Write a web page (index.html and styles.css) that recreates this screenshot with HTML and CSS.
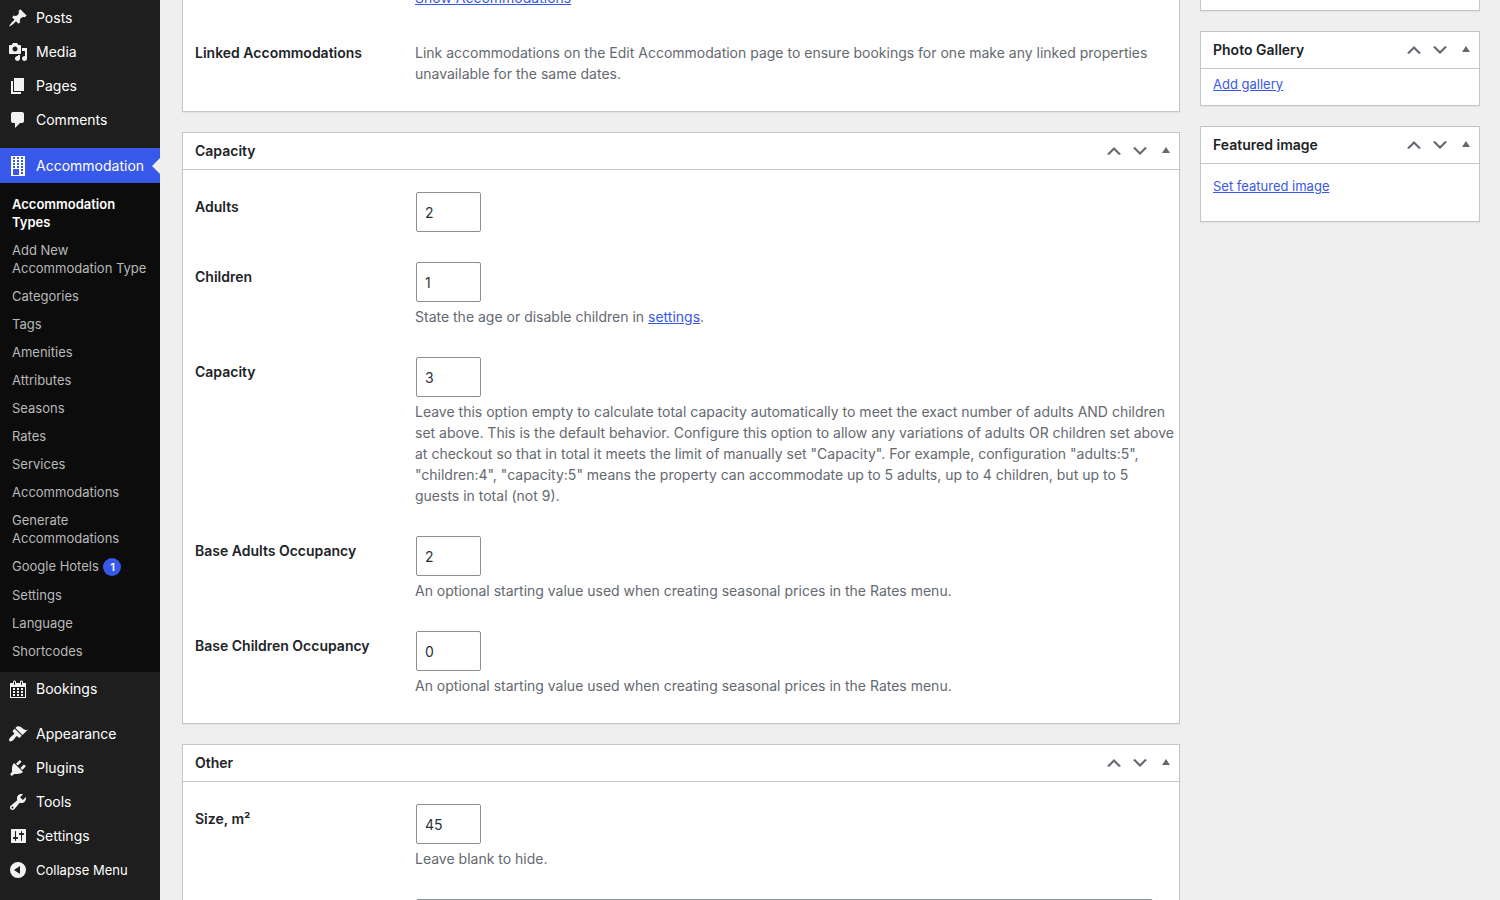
FILE: index.html
```html
<!DOCTYPE html>
<html lang="en">
  <head>
    <meta charset="UTF-8" />
    <meta name="viewport" content="width=device-width, initial-scale=1.0" />
    <title>Edit Accommodation Type</title>
    <link rel="stylesheet" href="styles.css">
  </head>
  <body>
    <!-- Shared icons -->
    <svg class="sprite" aria-hidden="true">
      <symbol id="up" viewBox="0 0 20 20"><path d="M15 14l-5-5-5 5-2-1 7-7 7 7z" /></symbol>
      <symbol id="down" viewBox="0 0 20 20"><path d="M5 6l5 5 5-5 2 1-7 7-7-7z" /></symbol>
      <symbol id="toggle" viewBox="0 0 20 20"><path d="M6 12l4-6 4 6z" /></symbol>
    </svg>

    <div class="admin">
      <nav class="admin-menu">
        <ul class="menu">
          <li>
            <a href="#" class="menu-link">
              <svg class="icon" viewBox="0 0 20 20"><path d="M10.44 3.02l1.82-1.82 6.36 6.35-1.83 1.82c-1.05-.68-2.48-.57-3.41.36l-.75.75c-.92.93-1.04 2.35-.35 3.41l-1.83 1.82-2.41-2.41-2.8 2.79c-.42.42-3.38 2.71-3.8 2.29s1.86-3.39 2.28-3.81l2.79-2.79L4.1 9.36l1.83-1.82c1.05.69 2.48.57 3.4-.36l.75-.75c.93-.92 1.05-2.35.36-3.41z" /></svg>
              Posts
            </a>
          </li>
          <li>
            <a href="#" class="menu-link">
              <svg class="icon" viewBox="0 0 20 20"><path d="M13 11V4c0-.55-.45-1-1-1h-1.67L9 1H5L3.67 3H2c-.55 0-1 .45-1 1v7c0 .55.45 1 1 1h10c.55 0 1-.45 1-1zM7 4.5c1.38 0 2.5 1.12 2.5 2.5S8.38 9.5 7 9.5 4.5 8.38 4.5 7 5.62 4.5 7 4.5zM14 6h5v10.5c0 1.38-1.12 2.5-2.5 2.5S14 17.88 14 16.5s1.12-2.5 2.5-2.5c.17 0 .34.02.5.05V9h-3V6zm-4 8.05V13h2v3.5c0 1.38-1.12 2.5-2.5 2.5S7 17.88 7 16.5 8.12 14 9.5 14c.17 0 .34.02.5.05z" /></svg>
              Media
            </a>
          </li>
          <li>
            <a href="#" class="menu-link">
              <svg class="icon" viewBox="0 0 20 20"><path d="M6 15V2h10v13H6zm-1 1h8v2H3V5h2v11z" /></svg>
              Pages
            </a>
          </li>
          <li>
            <a href="#" class="menu-link">
              <svg class="icon" viewBox="0 0 20 20"><path d="M5 2h9c1.1 0 2 .9 2 2v7c0 1.1-.9 2-2 2h-2l-5 5v-5H5c-1.1 0-2-.9-2-2V4c0-1.1.9-2 2-2z" /></svg>
              Comments
            </a>
          </li>
          <li class="separated">
            <a href="#" class="menu-link current">
              <svg class="icon" viewBox="0 0 20 20" shape-rendering="crispEdges"><path fill-rule="evenodd" d="M3 0h14v20H3zM5 1h2v2H5zM9 1h2v2H9zM13 1h2v2h-2zM5 4h2v2H5zM9 4h2v2H9zM13 4h2v2h-2zM5 7h2v2H5zM9 7h2v2H9zM13 7h2v2h-2zM5 10h2v2H5zM9 10h2v2H9zM13 10h2v2h-2zM5 13h6v6H5zM13 13h2v2h-2zM13 16h2v2h-2z" /></svg>
              Accommodation
            </a>
            <ul class="submenu">
              <li><a href="#" class="active">Accommodation Types</a></li>
              <li><a href="#">Add New Accommodation Type</a></li>
              <li><a href="#">Categories</a></li>
              <li><a href="#">Tags</a></li>
              <li><a href="#">Amenities</a></li>
              <li><a href="#">Attributes</a></li>
              <li><a href="#">Seasons</a></li>
              <li><a href="#">Rates</a></li>
              <li><a href="#">Services</a></li>
              <li><a href="#">Accommodations</a></li>
              <li><a href="#">Generate Accommodations</a></li>
              <li><a href="#">Google Hotels <span class="count">1</span></a></li>
              <li><a href="#">Settings</a></li>
              <li><a href="#">Language</a></li>
              <li><a href="#">Shortcodes</a></li>
            </ul>
          </li>
          <li>
            <a href="#" class="menu-link">
              <svg class="icon" viewBox="0 0 20 20"><path d="M15 4h3v15H2V4h3V3c0-.41.15-.76.44-1.06.29-.29.65-.44 1.06-.44s.77.15 1.06.44c.29.3.44.65.44 1.06v1h4V3c0-.41.15-.76.44-1.06.29-.29.65-.44 1.06-.44s.77.15 1.06.44c.29.3.44.65.44 1.06v1zM6 3v2.5c0 .14.05.26.15.36.09.09.21.14.35.14s.26-.05.35-.14c.1-.1.15-.22.15-.36V3c0-.14-.05-.26-.15-.35-.09-.1-.21-.15-.35-.15s-.26.05-.35.15c-.1.09-.15.21-.15.35zm7 0v2.5c0 .14.05.26.14.36.1.09.22.14.36.14s.26-.05.36-.14c.09-.1.14-.22.14-.36V3c0-.14-.05-.26-.14-.35-.1-.1-.22-.15-.36-.15s-.26.05-.36.15c-.09.09-.14.21-.14.35zm4 15V8H3v10h14zM5 9h2v2H5zM9 9h2v2H9zM13 9h2v2h-2zM5 12h2v2H5zM9 12h2v2H9zM13 12h2v2h-2zM5 15h2v2H5zM9 15h2v2H9zM13 15h2v2h-2z" /></svg>
              Bookings
            </a>
          </li>
          <li class="separated">
            <a href="#" class="menu-link">
              <svg class="icon" viewBox="0 0 20 20"><path d="M14.48 11.06L7.41 3.99l1.5-1.5c.5-.56 2.3-.47 3.51.32 1.21.8 1.43 1.28 2.91 2.1 1.18.64 2.45 1.26 4.45.85zm-.71.71L6.7 4.7 4.93 6.47c-.39.39-.39 1.02 0 1.41l1.06 1.06c.39.39.39 1.03 0 1.42-.6.6-1.43 1.11-2.21 1.69-.35.26-.7.53-1.01.84C1.43 14.23.4 16.08 1.4 17.07c.99 1 2.84-.03 4.18-1.36.31-.31.58-.66.85-1.02.57-.78 1.08-1.61 1.69-2.21.39-.39 1.02-.39 1.41 0l1.06 1.06c.39.39 1.02.39 1.41 0z" /></svg>
              Appearance
            </a>
          </li>
          <li>
            <a href="#" class="menu-link">
              <svg class="icon" viewBox="0 0 20 20"><path d="M13.11 4.36L9.87 7.6 8 5.73l3.24-3.24c.35-.34 1.05-.2 1.56.32.52.51.66 1.21.31 1.55zm-8 1.77l.91-1.12 9.01 9.01-1.19.84c-.71.71-2.63 1.16-3.82 1.16H6.14L4.9 17.26c-.59.59-1.54.59-2.12 0-.59-.58-.59-1.53 0-2.12l1.24-1.24v-3.88c0-1.13.4-3.19 1.09-3.89zm7.26 3.97l3.24-3.24c.34-.35 1.04-.21 1.55.31.52.51.66 1.21.31 1.55l-3.24 3.25z" /></svg>
              Plugins
            </a>
          </li>
          <li>
            <a href="#" class="menu-link">
              <svg class="icon" viewBox="0 0 20 20"><path d="M16.68 9.77c-1.34 1.34-3.3 1.67-4.95.99l-5.41 6.52c-.99.99-2.59.99-3.58 0s-.99-2.59 0-3.57l6.52-5.42c-.68-1.65-.35-3.61.99-4.95 1.28-1.28 3.12-1.62 4.72-1.06l-2.89 2.89 2.82 2.82 2.86-2.87c.53 1.58.18 3.39-1.08 4.65zM3.81 16.21c.4.39 1.04.39 1.43 0 .4-.4.4-1.04 0-1.43-.39-.4-1.03-.4-1.43 0-.39.39-.39 1.03 0 1.43z" /></svg>
              Tools
            </a>
          </li>
          <li>
            <a href="#" class="menu-link">
              <svg class="icon" viewBox="0 0 20 20"><path d="M18 16V4c0-.55-.45-1-1-1H4c-.55 0-1 .45-1 1v12c0 .55.45 1 1 1h13c.55 0 1-.45 1-1zM8 11h1c.55 0 1 .45 1 1s-.45 1-1 1H8v1.5c0 .28-.22.5-.5.5s-.5-.22-.5-.5V13H6c-.55 0-1-.45-1-1s.45-1 1-1h1V5.5c0-.28.22-.5.5-.5s.5.22.5.5V11zm5-2h-1c-.55 0-1-.45-1-1s.45-1 1-1h1V5.5c0-.28.22-.5.5-.5s.5.22.5.5V7h1c.55 0 1 .45 1 1s-.45 1-1 1h-1v5.5c0 .28-.22.5-.5.5s-.5-.22-.5-.5V9z" /></svg>
              Settings
            </a>
          </li>
          <li>
            <button type="button" class="menu-link collapse">
              <svg class="icon" viewBox="0 0 20 20"><path fill-rule="evenodd" d="M10 2a8 8 0 1 1 0 16 8 8 0 0 1 0-16zM12 6v8l-6-4z" /></svg>
              Collapse Menu
            </button>
          </li>
        </ul>
      </nav>

      <main class="content">
        <div class="main-column">
          <section class="panel panel-open">
            <div class="panel-body">
              <div class="field">
                <span class="field-label"></span>
                <div class="field-value">
                  <a href="#">Show Accommodations</a>
                </div>
              </div>
              <div class="field">
                <span class="field-label">Linked Accommodations</span>
                <div class="field-value">
                  <p>
                    Link accommodations on the Edit Accommodation page to ensure
                    bookings for one make any linked properties unavailable for
                    the same dates.
                  </p>
                </div>
              </div>
            </div>
          </section>

          <section class="panel">
            <header class="panel-header">
              <h2>Capacity</h2>
              <button type="button" aria-label="Move up"><svg class="icon"><use href="#up" /></svg></button>
              <button type="button" aria-label="Move down"><svg class="icon"><use href="#down" /></svg></button>
              <button type="button" aria-label="Toggle panel"><svg class="icon"><use href="#toggle" /></svg></button>
            </header>
            <div class="panel-body">
              <div class="field">
                <label class="field-label" for="adults">Adults</label>
                <div class="field-value">
                  <input type="text" class="small-text" id="adults" value="2" />
                </div>
              </div>
              <div class="field">
                <label class="field-label" for="children">Children</label>
                <div class="field-value">
                  <input type="text" class="small-text" id="children" value="1" />
                  <p>State the age or disable children in <a href="#">settings</a>.</p>
                </div>
              </div>
              <div class="field">
                <label class="field-label" for="capacity">Capacity</label>
                <div class="field-value">
                  <input type="text" class="small-text" id="capacity" value="3" />
                  <p>
                    Leave this option empty to calculate total capacity
                    automatically to meet the exact number of adults AND
                    children set above. This is the default behavior. Configure
                    this option to allow any variations of adults OR children
                    set above at checkout so that in total it meets the limit of
                    manually set "Capacity". For example, configuration
                    "adults:5", "children:4", "capacity:5" means the property
                    can accommodate up to 5 adults, up to 4 children, but up to
                    5 guests in total (not 9).
                  </p>
                </div>
              </div>
              <div class="field">
                <label class="field-label" for="baseAdults">Base Adults Occupancy</label>
                <div class="field-value">
                  <input type="text" class="small-text" id="baseAdults" value="2" />
                  <p>An optional starting value used when creating seasonal prices in the Rates menu.</p>
                </div>
              </div>
              <div class="field">
                <label class="field-label" for="baseChildren">Base Children Occupancy</label>
                <div class="field-value">
                  <input type="text" class="small-text" id="baseChildren" value="0" />
                  <p>An optional starting value used when creating seasonal prices in the Rates menu.</p>
                </div>
              </div>
            </div>
          </section>

          <section class="panel">
            <header class="panel-header">
              <h2>Other</h2>
              <button type="button" aria-label="Move up"><svg class="icon"><use href="#up" /></svg></button>
              <button type="button" aria-label="Move down"><svg class="icon"><use href="#down" /></svg></button>
              <button type="button" aria-label="Toggle panel"><svg class="icon"><use href="#toggle" /></svg></button>
            </header>
            <div class="panel-body">
              <div class="field">
                <label class="field-label" for="size">Size, m²</label>
                <div class="field-value">
                  <input type="text" class="small-text" id="size" value="45" />
                  <p>Leave blank to hide.</p>
                </div>
              </div>
              <div class="field">
                <span class="field-label"></span>
                <div class="field-value">
                  <input type="text" class="large-text" />
                </div>
              </div>
            </div>
          </section>
        </div>

        <aside class="side-column">
          <section class="panel panel-open side-top"></section>

          <section class="panel">
            <header class="panel-header">
              <h2>Photo Gallery</h2>
              <button type="button" aria-label="Move up"><svg class="icon"><use href="#up" /></svg></button>
              <button type="button" aria-label="Move down"><svg class="icon"><use href="#down" /></svg></button>
              <button type="button" aria-label="Toggle panel"><svg class="icon"><use href="#toggle" /></svg></button>
            </header>
            <div class="side-body">
              <a href="#">Add gallery</a>
            </div>
          </section>

          <section class="panel">
            <header class="panel-header">
              <h2>Featured image</h2>
              <button type="button" aria-label="Move up"><svg class="icon"><use href="#up" /></svg></button>
              <button type="button" aria-label="Move down"><svg class="icon"><use href="#down" /></svg></button>
              <button type="button" aria-label="Toggle panel"><svg class="icon"><use href="#toggle" /></svg></button>
            </header>
            <div class="side-body side-body-tall">
              <a href="#">Set featured image</a>
            </div>
          </section>
        </aside>
      </main>
    </div>
  </body>
</html>
```

FILE: styles.css
```css
:root {
  --accent: #3858e9;
  --menu: #1e1e1e;
  --submenu: #0c0c0c;
  --background: #efefef;
  --border: #c3c4c7;
  --text: #1d2327;
  --muted: #646970;
}

* {
  box-sizing: border-box;
}

body {
  margin: 0;
  font-family: Inter, sans-serif;
  font-size: 13px;
  line-height: 18px;
  background-color: var(--background);
  color: var(--text);
}

a {
  color: var(--accent);
}

h2,
p,
ul {
  margin: 0;
  padding: 0;
}

ul {
  list-style: none;
}

button {
  border: none;
  background: transparent;
  padding: 0;
  font-family: inherit;
  cursor: pointer;
}

.sprite {
  display: none;
}

.icon {
  display: block;
  flex: none;
  width: 20px;
  height: 20px;
  fill: currentColor;
}

.admin {
  display: flex;
  height: 100vh;
  overflow: hidden;
}

/* Menu */
.admin-menu {
  flex: none;
  width: 160px;
  padding-top: 1px;
  background-color: var(--menu);
}

.menu-link {
  display: flex;
  align-items: center;
  gap: 8px;
  width: 100%;
  height: 34px;
  padding: 0 8px;
  font-size: 14px;
  color: #fff;
  text-decoration: none;
}

.menu-link .icon {
  color: #f3f1f1;
}

.menu-link.current {
  position: relative;
  height: 35px;
  background-color: var(--accent);
}

.menu-link.current .icon {
  color: #fff;
}

.menu-link.current::after {
  content: "";
  position: absolute;
  right: 0;
  top: 10px;
  border: 8px solid transparent;
  border-left: none;
  border-right-color: var(--background);
}

.menu-link.collapse {
  font-size: 13px;
}

.separated {
  margin-top: 11px;
}

.submenu {
  padding: 7px 0;
  background-color: var(--submenu);
}

.submenu a {
  display: block;
  padding: 5px 12px;
  color: #b8b9ba;
  text-decoration: none;
}

.submenu .active {
  color: #fff;
  font-weight: 600;
}

.count {
  display: inline-block;
  min-width: 18px;
  margin-left: 1px;
  border-radius: 9px;
  background-color: var(--accent);
  color: #fff;
  font-size: 11px;
  font-weight: 600;
  text-align: center;
}

/* Content */
.content {
  flex: 1;
  display: flex;
  align-items: flex-start;
  gap: 20px;
  min-width: 0;
  padding: 0 20px 0 22px;
}

.main-column {
  flex: 1;
  min-width: 0;
}

.side-column {
  flex: none;
  width: 280px;
}

.panel {
  margin-bottom: 20px;
  border: 1px solid var(--border);
  background-color: #fff;
  box-shadow: 0 1px 1px rgba(0, 0, 0, 0.04);
}

/* Panels scrolled past the top of the window */
.panel-open {
  border-top: none;
}

.panel-open .panel-body {
  margin-top: -35px;
}

.side-top {
  height: 11px;
}

.panel-header {
  display: flex;
  align-items: center;
  gap: 6px;
  height: 37px;
  padding: 0 3px 0 12px;
  border-bottom: 1px solid var(--border);
}

.panel-header h2 {
  flex: 1;
  font-size: 14px;
  font-weight: 600;
}

.panel-header button {
  color: var(--muted);
}

.panel-body {
  padding: 7px 4px 12px 12px;
}

.field {
  display: flex;
  padding: 15px 0;
  font-size: 14px;
  line-height: 21px;
}

.field-label {
  flex: none;
  width: 220px;
  padding-top: 4px;
  font-weight: 600;
}

.field-value {
  flex: 1;
  min-width: 0;
  color: var(--muted);
}

.field-value p {
  margin-top: 4px;
}

.small-text,
.large-text {
  display: block;
  height: 40px;
  margin: 0 1px;
  padding: 0 8px;
  border: 1px solid #8c8f94;
  border-radius: 2px;
  background-color: #fff;
  color: #2c3338;
  font-family: inherit;
  font-size: 14px;
}

.small-text {
  width: 65px;
}

.large-text {
  width: 97%;
}

.side-body {
  padding: 6px 12px 12px;
}

.side-body-tall {
  padding: 13px 12px 26px;
}
```
